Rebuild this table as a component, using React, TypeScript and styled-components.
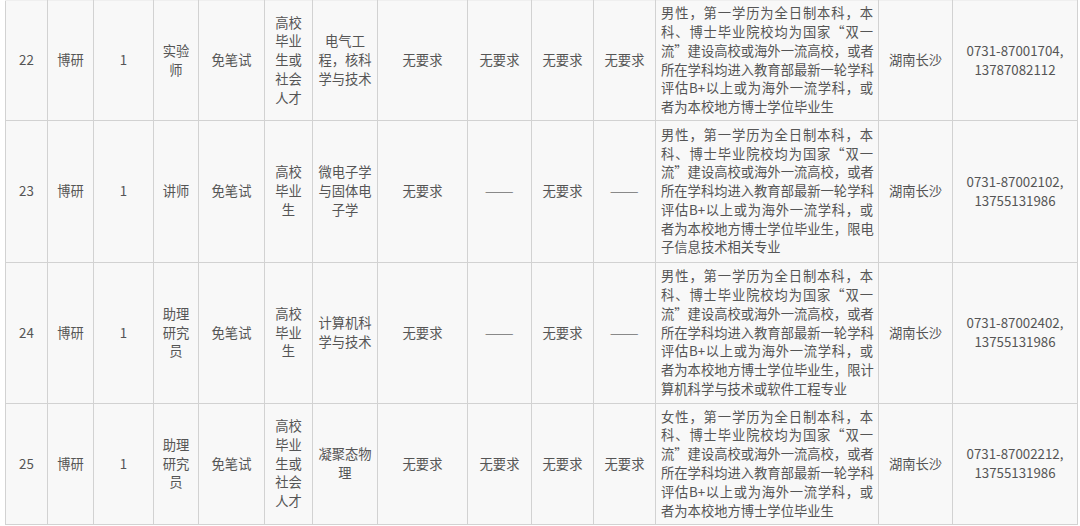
import React from 'react';
import styled, { createGlobalStyle } from 'styled-components';

const GlobalStyle = createGlobalStyle`
  html, body {
    margin: 0;
    padding: 0;
    background: #ffffff;
  }
  body {
    font-family: "Noto Sans CJK SC", "Noto Sans", sans-serif;
    color: #555555;
  }
`;

const Page = styled.div`
  width: 1080px;
  height: 526px;
  overflow: hidden;
  padding-left: 5px;
  box-sizing: border-box;
`;

const Table = styled.table`
  width: 1072px;
  table-layout: fixed;
  border-collapse: collapse;
  background: #f8f8f8;
  font-size: 13.3px;
  line-height: 18.8px;
`;

const Row = styled.tr<{ $h: number }>`
  height: ${(p) => p.$h}px;

  &:first-child td {
    border-top-color: #efefef;
  }
`;

const Cell = styled.td<{ $left?: boolean }>`
  border: 1px solid #d2d2d2;
  padding: 0 5px;
  text-align: ${(p) => (p.$left ? 'left' : 'center')};
  vertical-align: middle;
  white-space: pre-line;
  color: #555555;
`;

const Line = styled.span<{ $full?: boolean }>`
  display: block;
  white-space: nowrap;
  text-align: justify;
  text-align-last: ${(p) => (p.$full ? 'justify' : 'left')};
`;

const Dash = styled.span`
  display: inline-block;
  color: #707070;
  transform: scaleX(1.3);
`;

const widths = [42, 46, 60, 45, 66, 48, 65, 90, 64, 62, 62, 223, 74, 125];

const base = [
  '男性，第一学历为全日制本科，本',
  '科、博士毕业院校均为国家“双一',
  '流”建设高校或海外一流高校，或者',
  '所在学科均进入教育部最新一轮学科',
  '评估B+以上或为海外一流学科，或',
];

type Job = {
  no: string;
  height: number;
  title: string;
  source: string;
  major: string;
  c9: string;
  c11: string;
  req: string[];
  phone: string;
};

const jobs: Job[] = [
  {
    no: '22',
    height: 120,
    title: '实验\n师',
    source: '高校\n毕业\n生或\n社会\n人才',
    major: '电气工\n程，核科\n学与技术',
    c9: '无要求',
    c11: '无要求',
    req: [...base, '者为本校地方博士学位毕业生'],
    phone: '0731-87001704,\n13787082112',
  },
  {
    no: '23',
    height: 142,
    title: '讲师',
    source: '高校\n毕业\n生',
    major: '微电子学\n与固体电\n子学',
    c9: '——',
    c11: '——',
    req: [...base, '者为本校地方博士学位毕业生，限电', '子信息技术相关专业'],
    phone: '0731-87002102,\n13755131986',
  },
  {
    no: '24',
    height: 141,
    title: '助理\n研究\n员',
    source: '高校\n毕业\n生',
    major: '计算机科\n学与技术',
    c9: '——',
    c11: '——',
    req: [...base, '者为本校地方博士学位毕业生，限计', '算机科学与技术或软件工程专业'],
    phone: '0731-87002402,\n13755131986',
  },
  {
    no: '25',
    height: 121,
    title: '助理\n研究\n员',
    source: '高校\n毕业\n生或\n社会\n人才',
    major: '凝聚态物\n理',
    c9: '无要求',
    c11: '无要求',
    req: [...base.map((l, i) => (i === 0 ? l.replace('男', '女') : l)), '者为本校地方博士学位毕业生'],
    phone: '0731-87002212,\n13755131986',
  },
];

const Value = ({ text }: { text: string }) =>
  text === '——' ? <Dash>{text}</Dash> : <>{text}</>;

export default function App() {
  return (
    <Page>
      <GlobalStyle />
      <Table>
        <colgroup>
          {widths.map((w, i) => (
            <col key={i} style={{ width: w }} />
          ))}
        </colgroup>
        <tbody>
          {jobs.map((j) => (
            <Row key={j.no} $h={j.height}>
              <Cell>{j.no}</Cell>
              <Cell>博研</Cell>
              <Cell>1</Cell>
              <Cell>{j.title}</Cell>
              <Cell>免笔试</Cell>
              <Cell>{j.source}</Cell>
              <Cell>{j.major}</Cell>
              <Cell>无要求</Cell>
              <Cell>
                <Value text={j.c9} />
              </Cell>
              <Cell>无要求</Cell>
              <Cell>
                <Value text={j.c11} />
              </Cell>
              <Cell $left>
                {j.req.map((l, i) => (
                  <Line key={i} $full={i < j.req.length - 1}>
                    {l}
                  </Line>
                ))}
              </Cell>
              <Cell>湖南长沙</Cell>
              <Cell>{j.phone}</Cell>
            </Row>
          ))}
        </tbody>
      </Table>
    </Page>
  );
}
